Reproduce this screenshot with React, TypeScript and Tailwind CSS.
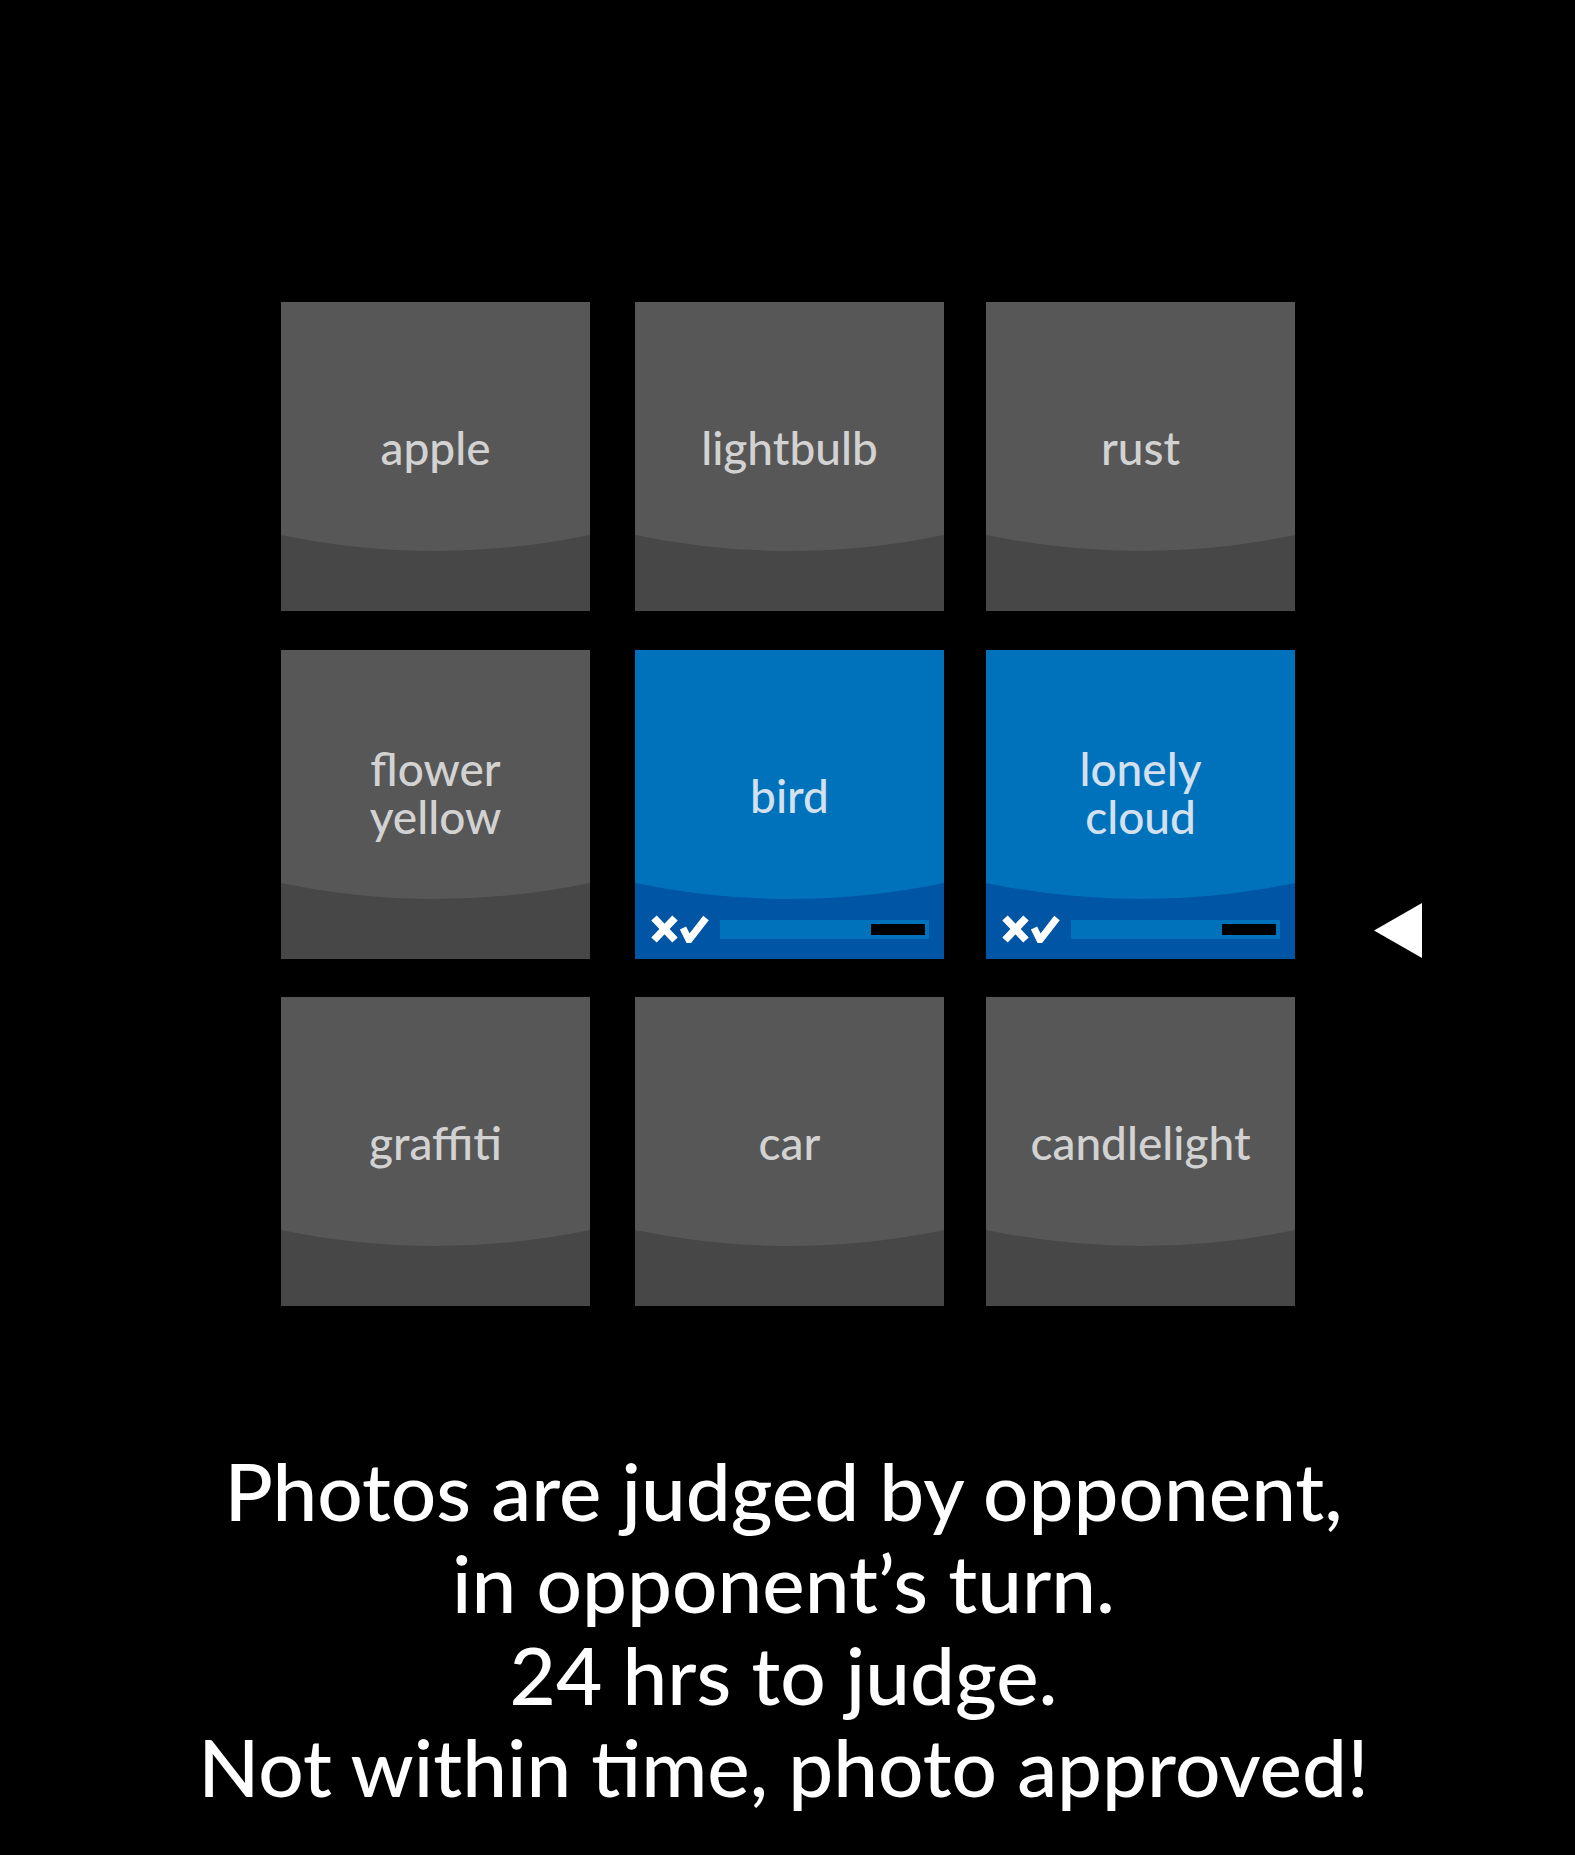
import { FC } from "react";

type TileData = {
  lines: string[];
  active?: boolean;
};

const rows: TileData[][] = [
  [{ lines: ["apple"] }, { lines: ["lightbulb"] }, { lines: ["rust"] }],
  [
    { lines: ["flower", "yellow"] },
    { lines: ["bird"], active: true },
    { lines: ["lonely", "cloud"], active: true },
  ],
  [{ lines: ["graffiti"] }, { lines: ["car"] }, { lines: ["candlelight"] }],
];

// column offsets and row offsets, spelled out so tailwind picks them up
const colGap = ["", "ml-[45px]", "ml-[42px]"];
const rowGap = ["", "mt-[39px]", "mt-[38px]"];

const JudgeBar: FC = () => (
  <div className="absolute left-[16px] bottom-[16px] flex items-center">
    <svg width="58" height="28" viewBox="0 0 58 28">
      <path
        d="M3 3 L24 25 M24 3 L3 25"
        stroke="#ffffff"
        strokeWidth="7.5"
        fill="none"
      />
      <path
        d="M32 13 L38 25 L55 3"
        stroke="#ffffff"
        strokeWidth="7"
        strokeLinejoin="miter"
        fill="none"
      />
    </svg>
    <div className="ml-[11px] flex h-[19px] w-[209px] justify-end bg-[#0072bb] pt-[4px] pr-[4px]">
      <div className="h-[11px] w-[54px] bg-black" />
    </div>
  </div>
);

const Tile: FC<{ tile: TileData; className?: string }> = ({
  tile,
  className = "",
}) => {
  const top = tile.active ? "#0072bb" : "#575757";
  const bottom = tile.active ? "#0055a5" : "#474747";
  const single = tile.lines.length === 1;
  return (
    <div
      className={`relative h-[309px] w-[309px] shrink-0 ${className}`}
      style={{ backgroundColor: top }}
    >
      <svg
        className="absolute inset-0"
        width="309"
        height="309"
        viewBox="0 0 309 309"
      >
        <path d="M0 233 Q154.5 265 309 233 L309 309 L0 309 Z" fill={bottom} />
      </svg>
      <div
        className={`relative flex h-full flex-col items-center justify-center font-['Lato',sans-serif] text-[46px] font-medium leading-[48px] ${
          single ? "pb-[17px]" : "pb-[24px]"
        } ${tile.active ? "text-[#d4e0ee]" : "text-[#d2d2d2]"}`}
      >
        {tile.lines.map((l) => (
          <span key={l}>{l}</span>
        ))}
      </div>
      {tile.active && <JudgeBar />}
    </div>
  );
};

export default function App() {
  return (
    <div className="min-h-[1855px] w-full bg-black pt-[302px]">
      <div className="flex flex-col pl-[281px]">
        {rows.map((row, r) => (
          <div key={r} className={`flex ${rowGap[r]}`}>
            {row.map((t, c) => (
              <Tile key={c} tile={t} className={colGap[c]} />
            ))}
            {r === 1 && (
              <svg
                className="ml-[79px] mb-[1px] self-end"
                width="48"
                height="55"
                viewBox="0 0 48 55"
              >
                <polygon points="0,27.5 48,0 48,55" fill="#ffffff" />
              </svg>
            )}
          </div>
        ))}
      </div>
      <p className="mt-[138px] pr-[8px] text-center font-['Lato',sans-serif] text-[80px] font-medium leading-[92px] text-white">
        Photos are judged by opponent,
        <br />
        in opponent’s turn.
        <br />
        24 hrs to judge.
        <br />
        Not within time, photo approved!
      </p>
    </div>
  );
}
